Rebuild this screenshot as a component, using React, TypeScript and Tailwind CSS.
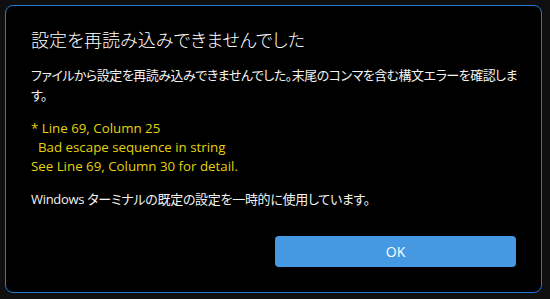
const JP = "font-['Segoe_UI','Open_Sans','Noto_Sans_CJK_JP',sans-serif] [font-feature-settings:'palt']";

export default function App() {
  return (
    <div className="w-[550px] h-[299px] bg-[#0f0f0f] pt-[5px] pl-[5px]">
      <div
        className={`w-[537px] h-[288px] rounded-lg border border-[#1f7ad6] bg-black px-[25px] pt-[20px] flex flex-col text-white ${JP}`}
      >
        <h1 className="text-[18px] leading-[28px] font-light tracking-[0.1px]">設定を再読み込みできませんでした</h1>

        <p className="mt-[11px] -mr-[4px] text-[13px] leading-[20px] tracking-[-0.5px] text-[#f2f2f2]">
          ファイルから設定を再読み込みできませんでした。末尾のコンマを含む構文エラーを確認します。
        </p>

        {/* parser output */}
        <div className="mt-[14px] text-[13.3px] leading-[19px] text-[#e3d20a]">
          <p>* Line 69, Column 25</p>
          <p className="pl-[7px]">Bad escape sequence in string</p>
          <p>See Line 69, Column 30 for detail.</p>
        </div>

        <p className="mt-[13px] text-[13px] leading-[20px] tracking-[-0.3px] text-[#f2f2f2]">
          Windows ターミナルの既定の設定を一時的に使用しています。
        </p>

        <div className="mt-auto mb-[25px] flex justify-end">
          <button
            type="button"
            className="w-[241px] h-[31px] rounded bg-[#4499e2] text-[14px] text-white"
          >
            OK
          </button>
        </div>
      </div>
    </div>
  );
}
